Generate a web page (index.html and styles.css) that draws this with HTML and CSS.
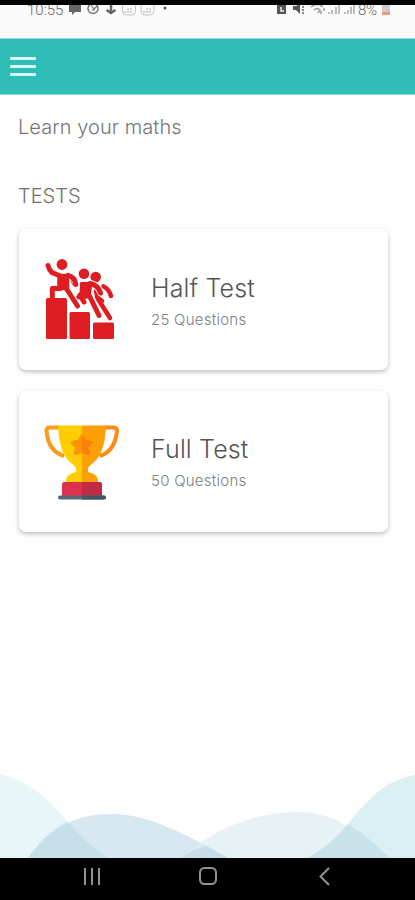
FILE: index.html
```html
<!DOCTYPE html>
<html lang="en">
<head>
    <meta charset="UTF-8">
    <meta name="viewport" content="width=device-width, initial-scale=1.0">
    <title>Learn your maths</title>
    <link rel="stylesheet" href="styles.css">
</head>
<body>
    <div class="status-bar">
        <div class="status-left">
            <span class="time">10:55</span>
            <svg class="status-icons" width="102" height="16" viewBox="0 0 102 16">
                <path d="M1 0H13V7H7L4 10V7H1Z" fill="#666"/>
                <circle cx="25" cy="3.500" r="5" fill="none" stroke="#777" stroke-width="1.500"/>
                <path d="M23 0L26 4L29 1M24 5H27" fill="none" stroke="#777" stroke-width="1.200"/>
                <path d="M43 0V8M38.500 5L43 8L47.500 5" fill="none" stroke="#666" stroke-width="2.500"/>
                <g fill="none" stroke="#c4c4c4">
                    <rect x="54.500" y="-3" width="13" height="13" rx="4"/>
                    <rect x="73" y="-3" width="13" height="13" rx="4"/>
                    <path d="M57 8V5M60 8V3M63 8V2M76 8V5M79 8V3M82 8V2" stroke="#aaa" stroke-dasharray="2 1"/>
                </g>
                <circle cx="97" cy="3" r="1.500" fill="#555"/>
            </svg>
        </div>
        <div class="status-right">
            <svg class="status-icons" width="81" height="16" viewBox="0 0 81 16">
                <path d="M1 0H10V9H1Z" fill="#555"/>
                <path d="M5 2V6H8" fill="none" stroke="#eee" stroke-width="1.500"/>
                <path d="M17 1H20L24 -1V9L20 5H17Z" fill="#555"/>
                <path d="M27 1V9" stroke="#888" stroke-width="2" stroke-dasharray="2 1"/>
                <path d="M35 2Q41 -3 47 2M38 5Q41 2 44 5L42 8M45 9V6M48 6V3" fill="none" stroke="#999" stroke-width="1.500"/>
                <path d="M53 9V7M56 9V5M63 0V9M69 9V7M72 9V5M78 0V9" stroke="#aaa" stroke-width="1.500"/>
                <path d="M60 9V2M75 9V2" stroke="#bbb" stroke-width="2"/>
            </svg>
            <span class="battery-text">8%</span>
            <span class="battery"></span>
        </div>
    </div>

    <header class="app-header">
        <button class="menu-btn" aria-label="Menu">
            <span></span>
            <span></span>
            <span></span>
        </button>
    </header>

    <main class="content">
        <p class="intro">Learn your maths</p>
        <h2 class="section-title">TESTS</h2>

        <div class="card">
            <svg class="card-icon" viewBox="0 0 76 84">
                <!-- podium -->
                <g fill="#de1d23">
                    <rect x="2" y="40" width="21" height="41" rx="1.500"/>
                    <rect x="25.500" y="54" width="20.500" height="27" rx="1.500"/>
                    <rect x="49" y="64.500" width="21" height="16.500" rx="1.500"/>
                </g>
                <!-- third runner -->
                <g fill="none" stroke="#de1d23" stroke-width="4.600" stroke-linecap="round" stroke-linejoin="round">
                    <circle cx="51.700" cy="19" r="5.300" fill="#de1d23" stroke="none"/>
                    <path d="M52 33L54 41L66 60M53 39L58 43"/>
                    <path d="M59.500 28.500Q65 31 67 38"/>
                </g>
                <!-- second runner -->
                <g stroke-linecap="round" stroke-linejoin="round">
                    <path d="M46 25Q54 27 56.500 35M45 37L55 57.500" fill="none" stroke="#fff" stroke-width="6.500"/>
                    <circle cx="40" cy="15.800" r="6.100" fill="#fff"/>
                    <circle cx="40" cy="15.800" r="5.300" fill="#de1d23"/>
                    <path d="M37.500 25.500H47L45 39L33 40L37 35Z" fill="#de1d23" stroke="#de1d23" stroke-width="3"/>
                    <path d="M46 25.500Q54 27 56.500 35M45 37L55 57.500M36 37L40 44" fill="none" stroke="#de1d23" stroke-width="5"/>
                </g>
                <!-- first runner -->
                <g stroke-linecap="round" stroke-linejoin="round">
                    <path d="M25 17Q31 19 31.700 27M22 30L34 48.500" fill="none" stroke="#fff" stroke-width="7"/>
                    <circle cx="18" cy="6.500" r="5.400" fill="#de1d23"/>
                    <path d="M14.500 17H24V31H14.500Z" fill="#de1d23" stroke="#de1d23" stroke-width="2.500"/>
                    <path d="M4 7.500Q5 12 8 14.500L15 17.500M24 17.500Q31 19 31.700 26.500M16 30.500H8.300V39M22 30L33.500 48" fill="none" stroke="#de1d23" stroke-width="5"/>
                </g>
                <path d="M27 22.500L29 27.500" stroke="#de1d23" stroke-width=".8"/>
            </svg>
            <div class="card-text">
                <h3>Half Test</h3>
                <p>25 Questions</p>
            </div>
        </div>

        <div class="card">
            <svg class="card-icon" viewBox="0 0 76 84">
                <path d="M16 9.500H6Q2.500 9.500 2.500 13Q4 33 20 38" fill="none" stroke="#fc9a1c" stroke-width="4"/>
                <path d="M60 9.500H69Q73 9.500 73 13Q71 33 56 38" fill="none" stroke="#fb8b12" stroke-width="4"/>
                <path d="M14 7.500H38V65H22Q21 56 32 54V50Q31 48 27 45Q15 36 14 7.500Z" fill="#ffce00"/>
                <path d="M62 7.500H38V65H54Q55 56 44 54V50Q45 48 49 45Q61 36 62 7.500Z" fill="#fe9f05"/>
                <path d="M38 18L41 23.500L47.500 24.500L43 29L44.500 35.500L38 33L31.500 35.500L33 29L28.500 24.500L35 23.500Z" fill="#fc7f0e" stroke="#fc7f0e" stroke-width="3" stroke-linejoin="round"/>
                <path d="M38 18V33L31.500 35.500L33 29L28.500 24.500L35 23.500Z" fill="#fe9305" stroke="#fe9305" stroke-width="3" stroke-linejoin="round"/>
                <path d="M38 18L41 23.500L47.500 24.500L43 29L44.500 35.500L38 33Z" fill="#fc7f0e"/>
                <path d="M20 64H38V78H18V66Q18 64 20 64Z" fill="#dd304d"/>
                <path d="M38 64H56Q58 64 58 66V78H38Z" fill="#c32945"/>
                <rect x="14" y="77.500" width="48" height="4" rx="2" fill="#586874"/>
                <path d="M38 77.500H60Q62 77.500 62 79.500T60 81.500H38Z" fill="#435561"/>
            </svg>
            <div class="card-text">
                <h3>Full Test</h3>
                <p>50 Questions</p>
            </div>
        </div>
    </main>

    <svg class="waves" viewBox="0 0 415 88">
        <path d="M0 4C28 10 50 30 67 51Q88 76 107 86V88H0Z" fill="#e9f6f8"/>
        <path d="M28 88C52 55 78 44 112 44C149 44 187 65 228 88Z" fill="#bad6e7" fill-opacity=".57"/>
        <path d="M67 51Q88 76 107 88H28Q46 62 67 51Z" fill="#b9d9e4" fill-opacity=".4"/>
        <path d="M181 88C207 64 250 42 299 42C342 42 363 70 390 88Z" fill="#dce9f2" fill-opacity=".66"/>
        <path d="M181 88Q195 78 207 76L228 88Z" fill="#b4d3e0" fill-opacity=".5"/>
        <path d="M308 88C326 76 336 70 348 54C367 30 385 10 415 5V88Z" fill="#cceaee" fill-opacity=".72"/>
        <path d="M308 88Q331 75 348 54Q367 65 390 88Z" fill="#b9d7e4" fill-opacity=".5"/>
    </svg>

    <nav class="nav-bar">
        <svg viewBox="0 0 415 42">
            <g fill="none" stroke="#929292" stroke-width="2">
                <path d="M85 10V27M92 10V27M99 10V27"/>
                <rect x="200" y="10" width="16" height="16" rx="4.500"/>
                <path d="M329 10L320.500 18.500L329 27"/>
            </g>
        </svg>
    </nav>
</body>
</html>
```

FILE: styles.css
```css
* {
    box-sizing: border-box;
}

body {
    margin: 0;
    height: 900px;
    display: flex;
    flex-direction: column;
    overflow: hidden;
    font-family: Inter, Roboto, sans-serif;
    font-weight: 300;
    background-color: #fefefe;
    color: #555;
}

h2, h3, p {
    margin: 0;
    font-weight: 300;
}

/* Status bar */
.status-bar {
    height: 38px;
    flex: none;
    display: flex;
    justify-content: space-between;
    padding: 0 25px 0 27px;
    border-top: 5px solid #000;
    background-color: #fbfbfb;
    overflow: hidden;
}

.status-left,
.status-right {
    display: flex;
    height: 16px;
}

.time,
.battery-text {
    margin-top: -4px;
    font-family: Roboto, sans-serif;
    font-size: 15px;
    line-height: 18px;
    font-weight: 300;
    color: #666;
}

.time {
    width: 41px;
}

.battery-text {
    width: 23px;
    letter-spacing: -0.3px;
}

.battery {
    width: 8px;
    height: 10px;
    background-color: #ccc;
    border-bottom: 3px solid #ef9a78;
}

.status-right {
    gap: 1px;
}

/* Header */
.app-header {
    height: 57px;
    flex: none;
    display: flex;
    align-items: center;
    padding-left: 10px;
    background-color: #30bdb8;
    border-top: 1px solid #8cdcd9;
    border-bottom: 1px solid #8cdcd9;
}

.menu-btn {
    width: 26px;
    padding: 0;
    display: flex;
    flex-direction: column;
    gap: 5px;
    border: none;
    background: none;
}

.menu-btn span {
    height: 3px;
    border-radius: 1px;
    background-color: #d9fbf8;
}

/* Content */
.content {
    flex: 1;
    padding: 20px 27px 0 19px;
}

.intro {
    margin-left: -1px;
    font-size: 20px;
    line-height: 24px;
    letter-spacing: 0.07px;
    color: #777;
}

.section-title {
    margin: 45px 0 21px -1px;
    font-size: 20px;
    line-height: 24px;
    color: #707070;
}

.card {
    height: 141px;
    display: flex;
    align-items: center;
    gap: 31px;
    margin-bottom: 21px;
    padding-left: 25px;
    border-radius: 7px;
    background-color: #fff;
    box-shadow: 0 2px 4px rgba(0, 0, 0, 0.25);
}

.card-icon {
    width: 76px;
    height: 84px;
}

.card + .card .card-icon {
    margin-top: -4px;
}

.card-text {
    padding-top: 2px;
}

.card + .card .card-text {
    padding-top: 1px;
}

.card-text h3 {
    font-size: 25px;
    line-height: 30px;
    letter-spacing: 0.15px;
    color: #555;
}

.card-text p {
    margin-top: 8px;
    font-size: 15px;
    line-height: 18px;
    letter-spacing: 0.25px;
    color: #808080;
}

/* Bottom waves */
.waves {
    display: block;
    width: 415px;
    height: 88px;
    flex: none;
}

.nav-bar {
    height: 42px;
    flex: none;
    background-color: #000;
}

.nav-bar svg {
    display: block;
}
```
